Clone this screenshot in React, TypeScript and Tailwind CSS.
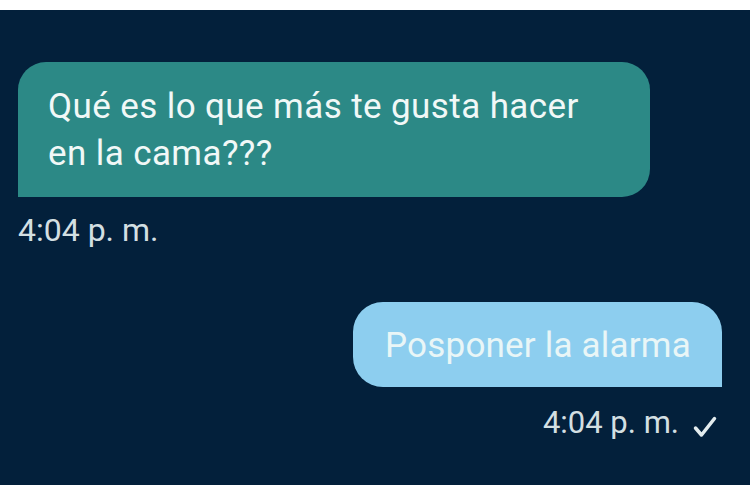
import React from 'react'

const font = { fontFamily: 'Roboto, "Noto Sans", sans-serif' }

function Check() {
  return (
    <svg width="24" height="22" viewBox="0 0 24 22" fill="none" className="ml-[14px] mb-[3px]">
      <path d="M2.5 12 L8.5 19 L21.5 2.5" stroke="#e3ecee" strokeWidth="3.5" strokeLinecap="round" strokeLinejoin="round" />
    </svg>
  )
}

export default function App() {
  return (
    <div className="w-[750px] h-[498px] bg-white pt-[10px]" style={font}>
      <div className="h-[475px] bg-[#03203b] pl-[18px] pr-[28px] pt-[52px] flex flex-col">
        {/* incoming */}
        <div className="w-[632px] h-[135px] bg-[#2c8986] rounded-[28px] rounded-bl-none pl-[30px] pt-[21px]">
          <p className="text-[35px] leading-[47px] tracking-[0.4px] text-[#f1f8f7]">
            Qué es lo que más te gusta hacer
            <br />
            en la cama???
          </p>
        </div>
        <p className="mt-[15px] text-[32px] leading-[36px] text-[#d3dfe2]">4:04 p. m.</p>

        {/* outgoing */}
        <div className="self-end mt-[54px] h-[85px] bg-[#8dceef] rounded-[30px] rounded-br-none pl-[32px] pr-[31px] pt-[20px]">
          <p className="text-[35px] leading-[47px] tracking-[0.2px] text-[#e9f6f7]">Posponer la alarma</p>
        </div>
        <div className="self-end mt-[18px] flex items-end pr-[5px]">
          <span className="text-[31px] leading-[36px] text-[#d3dfe2]">4:04 p. m.</span>
          <Check />
        </div>
      </div>
    </div>
  )
}
